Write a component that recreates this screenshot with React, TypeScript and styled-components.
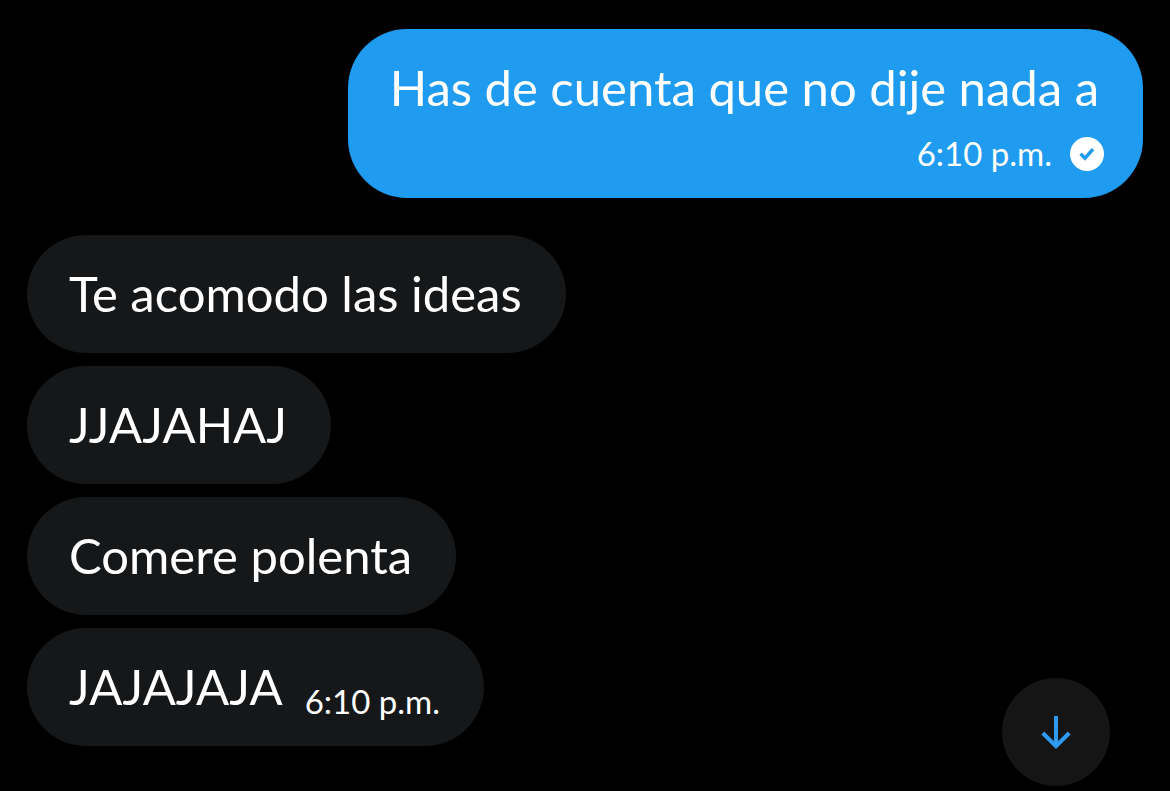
import React from "react";
import styled, { createGlobalStyle } from "styled-components";

const GlobalStyle = createGlobalStyle`
  * { box-sizing: border-box; }
  body {
    margin: 0;
    background: #000;
    color: #fff;
    font-family: Lato, "Liberation Sans", sans-serif;
  }
`;

const Conversation = styled.main`
  display: flex;
  flex-direction: column;
  gap: 37px;
  padding: 29px 27px 45px;
`;

const Group = styled.section<{ $own?: boolean }>`
  display: flex;
  flex-direction: column;
  align-items: ${(p) => (p.$own ? "flex-end" : "flex-start")};
  gap: 13px;
`;

const Bubble = styled.article<{ $own?: boolean }>`
  display: flex;
  flex-direction: ${(p) => (p.$own ? "column" : "row")};
  column-gap: 22px;
  row-gap: 16px;
  padding: ${(p) => (p.$own ? "28px 44px 25px 42px" : "28px 44px 30px 42px")};
  border-radius: 59px;
  background: ${(p) => (p.$own ? "#1f9bf0" : "#151719")};
`;

const Text = styled.p`
  margin: 0;
  font-size: 49px;
  line-height: 60px;
`;

const Meta = styled.div<{ $own?: boolean }>`
  display: flex;
  align-items: center;
  align-self: flex-end;
  gap: 18px;
  margin: ${(p) => (p.$own ? "0 -5px 0 0" : "0 0 -5px")};
`;

const Time = styled.time`
  font-size: 33px;
  line-height: 40px;
`;

const ScrollButton = styled.button`
  position: fixed;
  right: 60px;
  bottom: 5px;
  display: grid;
  place-items: center;
  width: 108px;
  height: 108px;
  padding: 0;
  border: 0;
  border-radius: 50%;
  background: #151515;
  cursor: pointer;
`;

const SentIcon = () => (
  <svg width="34" height="36" viewBox="0 0 34 36" role="img" aria-label="Enviado">
    <circle cx="17" cy="19" r="17" fill="#fff" />
    <path d="M10.600 18.800l4.400 4.400 8-9" fill="none" stroke="#1f9bf0" strokeWidth="3.500" />
  </svg>
);

const ArrowDownIcon = () => (
  <svg width="36" height="36" viewBox="0 0 36 36" aria-hidden="true">
    <path d="M18 2v31M4.800 19L18 32.200 31.200 19" fill="none" stroke="#2f9bf0" strokeWidth="4" />
  </svg>
);

export default function App() {
  return (
    <>
      <GlobalStyle />
      <Conversation>
        <Group $own>
          <Bubble $own>
            <Text>Has de cuenta que no dije nada a</Text>
            <Meta $own>
              <Time>6:10 p.m.</Time>
              <SentIcon />
            </Meta>
          </Bubble>
        </Group>
        <Group>
          <Bubble>
            <Text>Te acomodo las ideas</Text>
          </Bubble>
          <Bubble>
            <Text>JJAJAHAJ</Text>
          </Bubble>
          <Bubble>
            <Text>Comere polenta</Text>
          </Bubble>
          <Bubble>
            <Text>JAJAJAJA</Text>
            <Meta>
              <Time>6:10 p.m.</Time>
            </Meta>
          </Bubble>
        </Group>
      </Conversation>
      <ScrollButton aria-label="Ir al final">
        <ArrowDownIcon />
      </ScrollButton>
    </>
  );
}
